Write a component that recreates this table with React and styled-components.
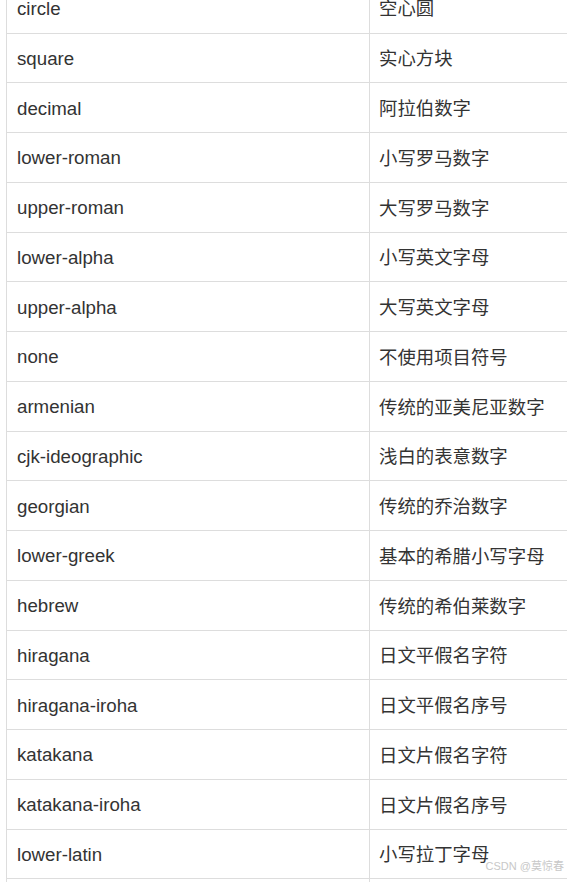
import React from 'react';
import styled, { createGlobalStyle } from 'styled-components';

const GlobalStyle = createGlobalStyle`
  html, body {
    margin: 0;
    padding: 0;
    background: #fff;
    overflow: hidden;
  }
`;

const Page = styled.div`
  position: relative;
  width: 567px;
  height: 882px;
  overflow: hidden;
  font-family: "Liberation Sans", Arial, "Noto Sans CJK SC", sans-serif;
  color: #333;
`;

const Table = styled.table`
  margin: -16.75px 0 0 6px;
  width: 620px;
  border-collapse: collapse;
  table-layout: fixed;
`;

const Row = styled.tr`
  height: 49.76px;
  border-bottom: 1px solid #dddddd;
`;

const Cell = styled.td`
  box-sizing: border-box;
  padding: ${p => (p.$cjk ? '0 10px 1px 9px' : '2px 10px 0 10px')};
  border-left: 1px solid #dddddd;
  vertical-align: middle;
  white-space: nowrap;
  font-family: ${p =>
    p.$cjk
      ? '"Noto Sans CJK SC", "Liberation Sans", sans-serif'
      : '"Liberation Sans", Arial, sans-serif'};
  font-size: ${p => (p.$cjk ? '18.4px' : '18.7px')};
`;

const Watermark = styled.div`
  position: absolute;
  right: 3px;
  bottom: 9px;
  font-family: "Liberation Sans", "Noto Sans CJK SC", sans-serif;
  font-size: 11px;
  color: #c8c8c8;
  text-shadow: 0 0 2px #fff;
`;

const rows = [
  ['circle', '空心圆'],
  ['square', '实心方块'],
  ['decimal', '阿拉伯数字'],
  ['lower-roman', '小写罗马数字'],
  ['upper-roman', '大写罗马数字'],
  ['lower-alpha', '小写英文字母'],
  ['upper-alpha', '大写英文字母'],
  ['none', '不使用项目符号'],
  ['armenian', '传统的亚美尼亚数字'],
  ['cjk-ideographic', '浅白的表意数字'],
  ['georgian', '传统的乔治数字'],
  ['lower-greek', '基本的希腊小写字母'],
  ['hebrew', '传统的希伯莱数字'],
  ['hiragana', '日文平假名字符'],
  ['hiragana-iroha', '日文平假名序号'],
  ['katakana', '日文片假名字符'],
  ['katakana-iroha', '日文片假名序号'],
  ['lower-latin', '小写拉丁字母'],
  ['upper-latin', '大写拉丁字母'],
];

export default function App() {
  return (
    <>
      <GlobalStyle />
      <Page>
        <Table>
          <colgroup>
            <col style={{ width: 363 }} />
            <col />
          </colgroup>
          <tbody>
            {rows.map(([value, desc]) => (
              <Row key={value}>
                <Cell>{value}</Cell>
                <Cell $cjk>{desc}</Cell>
              </Row>
            ))}
          </tbody>
        </Table>
        <Watermark>CSDN @莫惊春</Watermark>
      </Page>
    </>
  );
}
